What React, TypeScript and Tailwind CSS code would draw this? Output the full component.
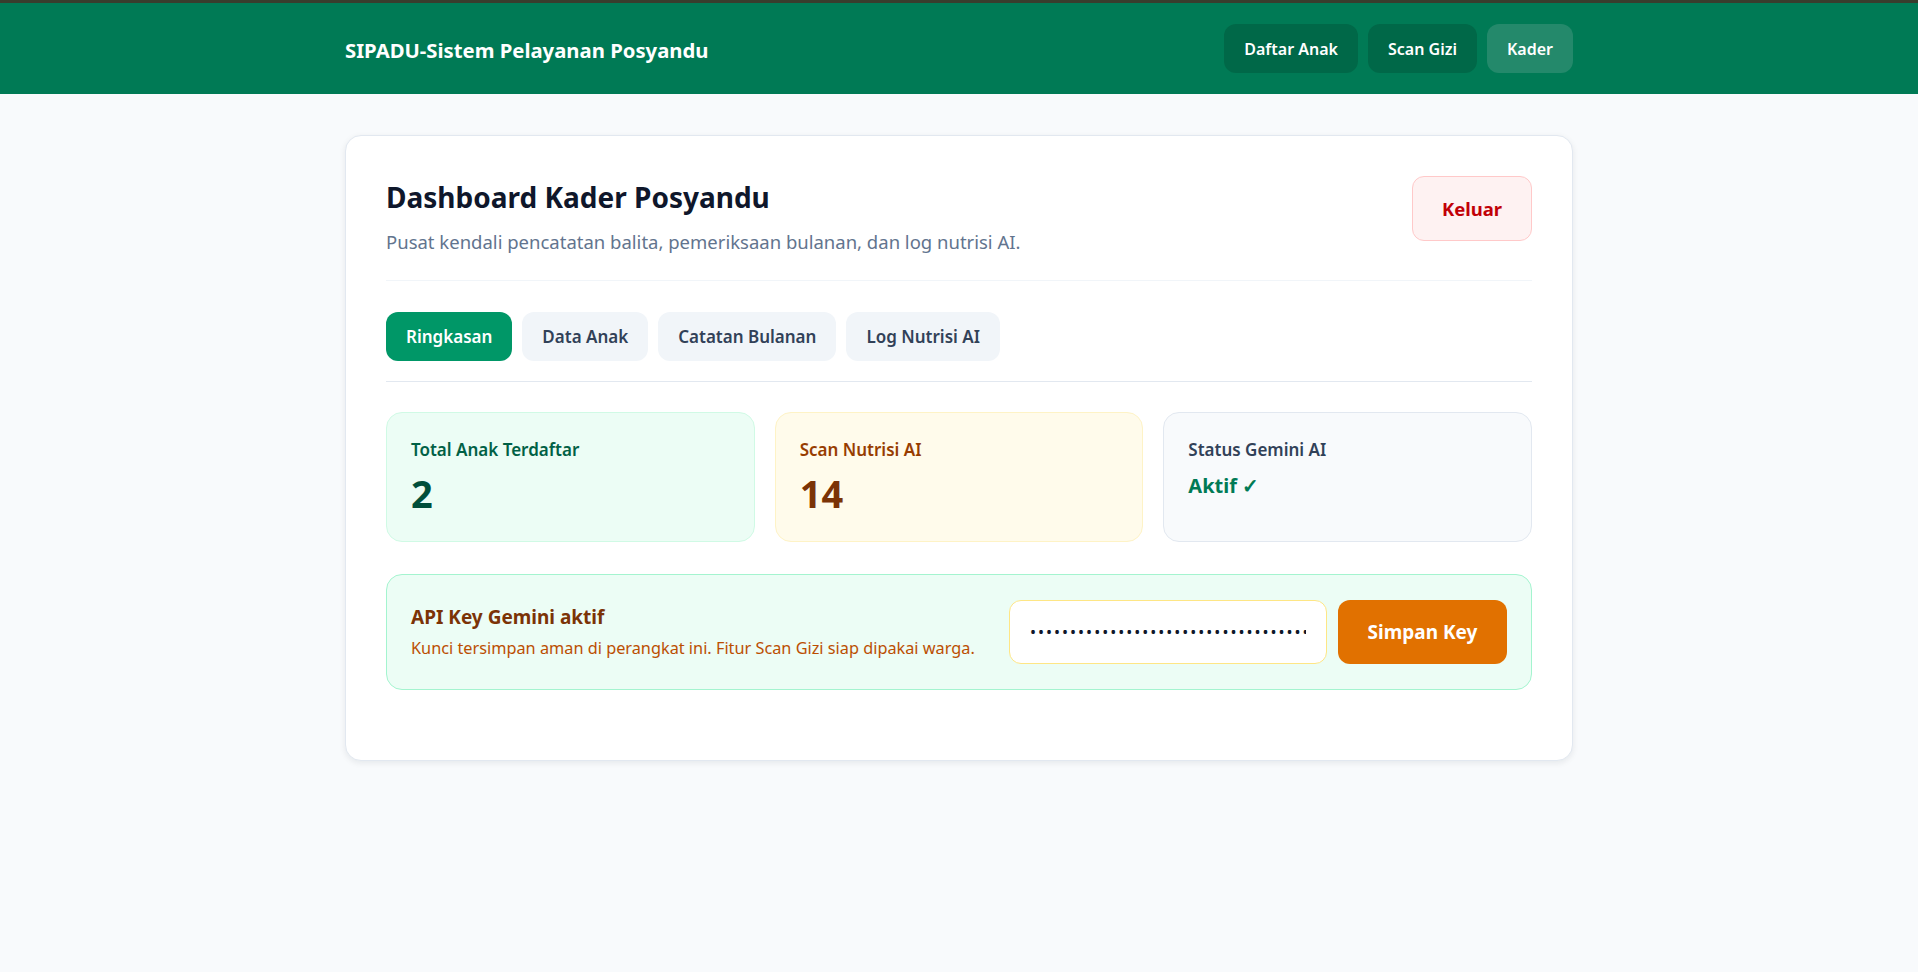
import { useState } from "react";

const navItems = ["Daftar Anak", "Scan Gizi", "Kader"];
const tabs = ["Ringkasan", "Data Anak", "Catatan Bulanan", "Log Nutrisi AI"];

const App = () => {
  const [tab, setTab] = useState("Ringkasan");
  const [apiKey, setApiKey] = useState("AIzaSyD8x2Kq7Lm4Np9Rt3Vw6Yz1Bc5Fg0Hj2Kl7Mn");

  return (
    <div className="min-h-screen w-full bg-slate-50 font-['Noto_Sans',sans-serif]">
      {/* Header */}
      <header className="border-t-[3px] border-[#383d2d] bg-[#007a55]">
        <div className="mx-auto flex h-[91px] w-full max-w-[1228px] items-center justify-between">
          <h1 className="pt-[3px] text-[20.3px] font-bold text-white">
            SIPADU-Sistem Pelayanan Posyandu
          </h1>
          <nav className="flex gap-[10px]">
            {navItems.map((item) => (
              <button
                key={item}
                className={`h-[49px] rounded-xl px-5 text-[16px] font-semibold text-white ${
                  item === "Kader" ? "bg-[#24896b]" : "bg-[#006848]"
                }`}
              >
                {item}
              </button>
            ))}
          </nav>
        </div>
      </header>

      <main className="mx-auto w-full max-w-[1228px] pt-[41px]">
        <div className="rounded-2xl border border-slate-200 bg-white p-10 pb-[70px] shadow-[0_2px_6px_rgba(15,23,42,0.08)]">
          {/* Title row */}
          <div className="flex items-start justify-between border-b border-slate-100 pb-6">
            <div>
              <h2 className="text-[28px] leading-[42px] font-bold text-slate-900">
                Dashboard Kader Posyandu
              </h2>
              <p className="mt-[10px] text-[18.5px] text-slate-500">
                Pusat kendali pencatatan balita, pemeriksaan bulanan, dan log nutrisi AI.
              </p>
            </div>
            <button className="h-[65px] w-[120px] rounded-xl border border-red-200 bg-red-50 text-[18.5px] font-bold text-red-700">
              Keluar
            </button>
          </div>

          {/* Tabs */}
          <div className="mt-[31px] flex gap-[10px] border-b border-slate-200 pb-5">
            {tabs.map((t) => (
              <button
                key={t}
                onClick={() => setTab(t)}
                className={`h-[49px] rounded-xl px-5 text-[17px] font-semibold ${
                  tab === t ? "bg-[#009767] text-white" : "bg-slate-100 text-slate-700"
                }`}
              >
                {t}
              </button>
            ))}
          </div>

          {/* Stats */}
          <div className="mt-[30px] grid grid-cols-3 gap-5">
            <div className="h-[130px] rounded-2xl border border-emerald-100 bg-emerald-50 p-6">
              <p className="text-[17px] font-semibold text-emerald-800">Total Anak Terdaftar</p>
              <p className="mt-[11px] text-[38px] leading-10 font-bold text-emerald-900">2</p>
            </div>
            <div className="h-[130px] rounded-2xl border border-amber-100 bg-amber-50 p-6">
              <p className="text-[17px] font-semibold text-amber-800">Scan Nutrisi AI</p>
              <p className="mt-[11px] text-[38px] leading-10 font-bold text-amber-900">14</p>
            </div>
            <div className="h-[130px] rounded-2xl border border-slate-200 bg-slate-50 p-6">
              <p className="text-[17px] font-semibold text-slate-700">Status Gemini AI</p>
              <p className="mt-[10px] text-xl font-bold text-emerald-700">Aktif ✓</p>
            </div>
          </div>

          {/* API key */}
          <div className="mt-8 flex items-center justify-between rounded-2xl border border-emerald-200 bg-emerald-50 px-6 py-[25px]">
            <div>
              <p className="text-[19px] font-bold text-amber-900">API Key Gemini aktif</p>
              <p className="mt-1 text-[16.3px] text-amber-700">
                Kunci tersimpan aman di perangkat ini. Fitur Scan Gizi siap dipakai warga.
              </p>
            </div>
            <div className="flex gap-[11px]">
              <input
                type="password"
                value={apiKey}
                onChange={(e) => setApiKey(e.target.value)}
                className="h-[64px] w-[318px] rounded-xl border border-amber-200 bg-white px-5 text-base tracking-[2px] text-slate-900 outline-none"
              />
              <button className="h-[64px] w-[169px] rounded-xl bg-amber-600 text-[19px] font-bold text-white">
                Simpan Key
              </button>
            </div>
          </div>
        </div>
      </main>
    </div>
  );
};

export default App;
